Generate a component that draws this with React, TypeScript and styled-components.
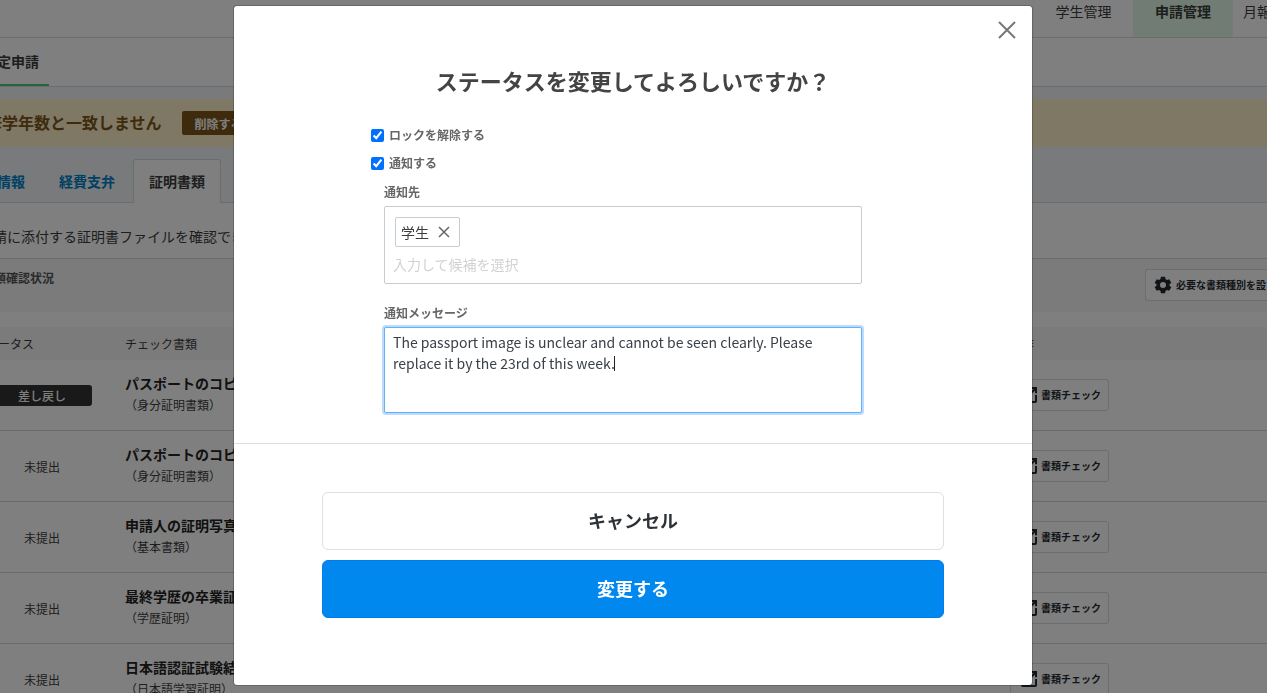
import React, { useState } from "react";
import styled, { createGlobalStyle, css } from "styled-components";

const GlobalStyle = createGlobalStyle`
  *, *::before, *::after { box-sizing: border-box; }
  body {
    margin: 0;
    background: #fff;
    color: #3c3c3c;
    font-family: "Noto Sans CJK JP", sans-serif;
    font-size: 14px;
    line-height: 22px;
  }
  button, input, textarea { font-family: inherit; margin: 0; }
`;

const Viewport = styled.div`
  height: 100vh;
  overflow: hidden;
`;

const Page = styled.div`
  margin-left: -14px;
`;

const TopNav = styled.nav`
  display: flex;
  justify-content: flex-end;
  height: 38px;
  border-bottom: 1px solid #d6d9db;
`;

const TopNavLink = styled.a<{ $active?: boolean; $cut?: boolean }>`
  width: 100px;
  color: #3c3c3c;
  text-align: center;
  text-decoration: none;
  white-space: nowrap;
  ${(p) =>
    p.$active
      ? css`
          background: #e0f8e8;
          font-weight: 700;
        `
      : css`
          border-left: 1px solid #f2f2f2;
        `}
  ${(p) =>
    p.$cut &&
    css`
      width: 34px;
      padding-left: 10px;
      border-left: 0;
      text-align: left;
      overflow: hidden;
    `}
`;

const SubNav = styled.nav`
  display: flex;
  height: 49px;
  border-bottom: 1px solid #d6d9db;
`;

const SubNavLink = styled.a`
  padding: 12px 10px 0 11px;
  border-bottom: 2px solid #4fc878;
  color: #3c3c3c;
  font-weight: 700;
  text-decoration: none;
`;

const Band = styled.div`
  padding-top: 12px;
  background: #f1f4f7;
  border-bottom: 1px solid #d4dadf;
`;

const Alert = styled.div`
  display: flex;
  align-items: center;
  gap: 20px;
  height: 48px;
  background: #fff0ca;
  color: #7c571a;
  font-size: 16px;
  font-weight: 700;
`;

const AlertText = styled.span`
  padding-bottom: 2px;
`;

const AlertButton = styled.button`
  height: 24px;
  padding: 0 13px;
  border: 0;
  border-radius: 2px;
  background: #7c571a;
  color: #fff;
  font-size: 12px;
  font-weight: 700;
`;

const Tabs = styled.div`
  display: flex;
  height: 56px;
  padding-top: 12px;
  margin-bottom: -1px;
`;

const Tab = styled.a<{ $active?: boolean }>`
  padding: 10px 16px;
  border: 1px solid transparent;
  color: #0080c8;
  font-weight: 700;
  text-decoration: none;
  &:first-child { padding-left: 10px; }
  ${(p) =>
    p.$active &&
    css`
      margin-left: 1px;
      padding: 10px 15px;
      border-color: #d4dadf;
      border-bottom: 0;
      border-radius: 3px 3px 0 0;
      background: #fff;
      color: #3c3c3c;
    `}
`;

const Description = styled.p`
  margin: 0;
  padding: 22px 7px 11px;
  border-bottom: 1px solid #d6d6d6;
`;

const StatusBar = styled.div`
  display: flex;
  justify-content: space-between;
  height: 53px;
  padding: 8px 0 0 8px;
  margin-bottom: 15px;
  background: #f6f6f6;
  color: #555;
  font-size: 12px;
  font-weight: 700;
`;

const SmallButton = styled.button<{ $cut?: boolean }>`
  display: inline-flex;
  align-items: center;
  gap: 4px;
  height: 32px;
  padding: 0 7px 2px 10px;
  border: 1px solid #d6dbdf;
  border-radius: 3px;
  background: #fff;
  color: #252b31;
  font-size: 10px;
  font-weight: 700;
  white-space: nowrap;
  vertical-align: middle;
  svg { flex: none; position: relative; top: 1px; }
  ${(p) =>
    p.$cut &&
    css`
      width: 122px;
      margin-top: 2px;
      padding: 0 0 2px 8px;
      border-right: 0;
      border-radius: 3px 0 0 3px;
      overflow: hidden;
    `}
`;

const Table = styled.table`
  width: 100%;
  border-collapse: separate;
  border-spacing: 0;
  table-layout: fixed;
  th {
    height: 33px;
    padding: 0;
    background: #f6f6f6;
    font-size: 12px;
    font-weight: 400;
    text-align: left;
  }
  th:first-child { width: 139px; padding-left: 12px; }
  th:last-child { width: 257px; }
`;

const Row = styled.tr`
  td {
    height: 71px;
    padding: 0;
    border-bottom: 1px solid #d6d6d6;
    vertical-align: middle;
  }
`;

const Status = styled.span<{ $solid?: boolean }>`
  display: block;
  width: 100px;
  margin-left: 6px;
  font-size: 12px;
  line-height: 21px;
  text-align: center;
  ${(p) =>
    p.$solid &&
    css`
      border-radius: 3px;
      background: #333;
      color: #fff;
      font-weight: 500;
    `}
`;

const DocName = styled.div`
  color: #222;
  font-weight: 700;
`;

const DocKind = styled.div`
  padding-bottom: 2px;
  font-size: 12px;
`;

const Overlay = styled.div`
  position: fixed;
  inset: 0;
  display: flex;
  justify-content: center;
  align-items: flex-start;
  padding: 5px 1px 0 0;
  background: rgba(0, 0, 0, 0.5);
`;

const Dialog = styled.div`
  position: relative;
  width: 800px;
  max-width: 100%;
  border: 1px solid rgba(0, 0, 0, 0.2);
  border-radius: 4px;
  background: #fff;
  background-clip: padding-box;
`;

const CloseButton = styled.button`
  position: absolute;
  top: 15px;
  right: 16px;
  display: flex;
  padding: 0;
  border: 0;
  background: none;
  color: #777;
`;

const Form = styled.div`
  padding: 0 170px 30px 137px;
  border-bottom: 1px solid #dcdfe2;
`;

const Title = styled.h2`
  margin: 0;
  padding: 58px 0 25px;
  color: #444;
  font-size: 22px;
  font-weight: 700;
  line-height: 32px;
  text-align: center;
`;

const CheckLabel = styled.label`
  display: flex;
  align-items: center;
  gap: 5px;
  height: 28px;
  color: #666;
  font-size: 12px;
  font-weight: 700;
  input {
    width: 13px;
    height: 13px;
    accent-color: #0070ff;
  }
`;

const Fields = styled.div`
  padding-left: 13px;
`;

const FieldLabel = styled.label`
  display: block;
  padding: 2px 0;
  color: #666;
  font-size: 12px;
  font-weight: 700;
  line-height: 25px;
`;

const TagBox = styled.div`
  height: 78px;
  margin-bottom: 14px;
  padding: 10px 8px;
  border: 1px solid #c5cdd2;
  border-radius: 2px;
  input {
    display: block;
    width: 100%;
    height: 22px;
    margin-top: 6px;
    padding: 0;
    border: 0;
    outline: 0;
    font-size: 14px;
  }
  input::placeholder { color: #d2d2d2; opacity: 1; }
`;

const Tag = styled.span`
  display: flex;
  align-items: center;
  gap: 9px;
  width: max-content;
  height: 30px;
  margin-left: 2px;
  padding: 0 9px 0 5px;
  border: 1px solid #c5cdd2;
  border-radius: 2px;
  button {
    display: flex;
    padding: 0;
    border: 0;
    background: none;
    color: #666;
  }
`;

const MessageBox = styled.div`
  position: relative;
`;

const Message = styled.textarea`
  display: block;
  width: 100%;
  height: 86px;
  padding: 4px 8px;
  border: 1px solid #63b0fa;
  border-radius: 2px;
  outline: 0;
  box-shadow: 0 0 0 2px #bcdcfd;
  color: #3a4046;
  caret-color: transparent;
  font-size: 14px;
  line-height: 21px;
  resize: none;
`;

const Caret = styled.span`
  position: absolute;
  top: 29px;
  left: 230px;
  width: 1px;
  height: 15px;
  background: #222;
  pointer-events: none;
`;

const Actions = styled.footer`
  display: flex;
  flex-direction: column;
  gap: 10px;
  padding: 48px 88px 67px;
`;

const ActionButton = styled.button<{ $primary?: boolean }>`
  height: 58px;
  padding: 0 0 2px;
  border: 1px solid ${(p) => (p.$primary ? "#007bf0" : "#dcdfe3")};
  border-radius: 6px;
  background: ${(p) => (p.$primary ? "#0088ee" : "#fff")};
  color: ${(p) => (p.$primary ? "#fff" : "#2c3238")};
  font-size: 18px;
  font-weight: 700;
`;

const Cross = ({ size, weight }: { size: number; weight: number }) => (
  <svg width={size} height={size} viewBox={`0 0 ${size} ${size}`} aria-hidden="true">
    <path
      d={`M1 1L${size - 1} ${size - 1}M${size - 1} 1L1 ${size - 1}`}
      stroke="currentColor"
      strokeWidth={weight}
      fill="none"
    />
  </svg>
);

const GearIcon = () => (
  <svg width="18" height="18" viewBox="0 0 24 24" fill="currentColor" aria-hidden="true">
    <path d="M9.2 1h5.6l.6 3.1 1.9 1.1 3-1 2.8 4.8-2.4 2.1v1.8l2.4 2.1-2.8 4.8-3-1-1.9 1.1-.6 3.1H9.2l-.6-3.1-1.9-1.1-3 1L.9 15l2.4-2.1v-1.8L.9 9l2.8-4.8 3 1 1.9-1.1zM12 8a4 4 0 100 8 4 4 0 000-8z" />
  </svg>
);

const OpenIcon = () => (
  <svg width="16" height="16" viewBox="3 3 18 18" fill="currentColor" aria-hidden="true">
    <path d="M18.8 18.8H5.2V5.2H12V3H5a2 2 0 00-2 2v14a2 2 0 002 2h14a2 2 0 002-2v-7h-2.2zM14 3v2.2h3.2L7.6 14.8l1.6 1.6 9.6-9.6V10H21V3z" />
  </svg>
);

const documents = [
  { status: "差し戻し", returned: true, name: "パスポートのコピー", kind: "（身分証明書類）" },
  { status: "未提出", name: "パスポートのコピー", kind: "（身分証明書類）" },
  { status: "未提出", name: "申請人の証明写真", kind: "（基本書類）" },
  { status: "未提出", name: "最終学歴の卒業証", kind: "（学歴証明）" },
  { status: "未提出", name: "日本語認証試験結", kind: "（日本語学習証明）" },
];

const initialMessage =
  "The passport image is unclear and cannot be seen clearly. Please replace it by the 23rd of this week.";

export default function App() {
  const [message, setMessage] = useState(initialMessage);

  return (
    <>
      <GlobalStyle />
      <Viewport>
        <Page>
          <TopNav>
            <TopNavLink href="#students">学生管理</TopNavLink>
            <TopNavLink href="#applications" $active>申請管理</TopNavLink>
            <TopNavLink href="#reports" $cut>月報</TopNavLink>
          </TopNav>
          <SubNav>
            <SubNavLink href="#certification">定申請</SubNavLink>
          </SubNav>
          <Band>
            <Alert>
              <AlertText>修学年数と一致しません</AlertText>
              <AlertButton type="button">削除する</AlertButton>
            </Alert>
            <Tabs>
              <Tab href="#info">情報</Tab>
              <Tab href="#expenses">経費支弁</Tab>
              <Tab href="#documents" $active>証明書類</Tab>
            </Tabs>
          </Band>
          <Description>請に添付する証明書ファイルを確認できます</Description>
          <StatusBar>
            類確認状況
            <SmallButton type="button" $cut>
              <GearIcon />
              必要な書類種別を設
            </SmallButton>
          </StatusBar>
          <Table>
            <thead>
              <tr>
                <th>ータス</th>
                <th>チェック書類</th>
                <th>操作</th>
              </tr>
            </thead>
            <tbody>
              {documents.map((doc, i) => (
                <Row key={i}>
                  <td><Status $solid={doc.returned}>{doc.status}</Status></td>
                  <td>
                    <DocName>{doc.name}</DocName>
                    <DocKind>{doc.kind}</DocKind>
                  </td>
                  <td>
                    <SmallButton type="button">
                      <OpenIcon />
                      書類チェック
                    </SmallButton>
                  </td>
                </Row>
              ))}
            </tbody>
          </Table>
        </Page>
      </Viewport>

      <Overlay>
        <Dialog role="dialog" aria-modal="true" aria-labelledby="dialog-title">
          <CloseButton type="button" aria-label="閉じる">
            <Cross size={18} weight={2} />
          </CloseButton>
          <Title id="dialog-title">ステータスを変更してよろしいですか？</Title>
          <Form>
            <CheckLabel>
              <input type="checkbox" defaultChecked />
              ロックを解除する
            </CheckLabel>
            <CheckLabel>
              <input type="checkbox" defaultChecked />
              通知する
            </CheckLabel>
            <Fields>
              <FieldLabel htmlFor="recipients">通知先</FieldLabel>
              <TagBox>
                <Tag>
                  学生
                  <button type="button" aria-label="学生を外す">
                    <Cross size={12} weight={1.5} />
                  </button>
                </Tag>
                <input id="recipients" type="text" placeholder="入力して候補を選択" />
              </TagBox>
              <FieldLabel htmlFor="message">通知メッセージ</FieldLabel>
              <MessageBox>
                <Message
                  id="message"
                  autoFocus
                  value={message}
                  onChange={(e) => setMessage(e.target.value)}
                />
                {message === initialMessage && <Caret />}
              </MessageBox>
            </Fields>
          </Form>
          <Actions>
            <ActionButton type="button">キャンセル</ActionButton>
            <ActionButton type="button" $primary>変更する</ActionButton>
          </Actions>
        </Dialog>
      </Overlay>
    </>
  );
}
